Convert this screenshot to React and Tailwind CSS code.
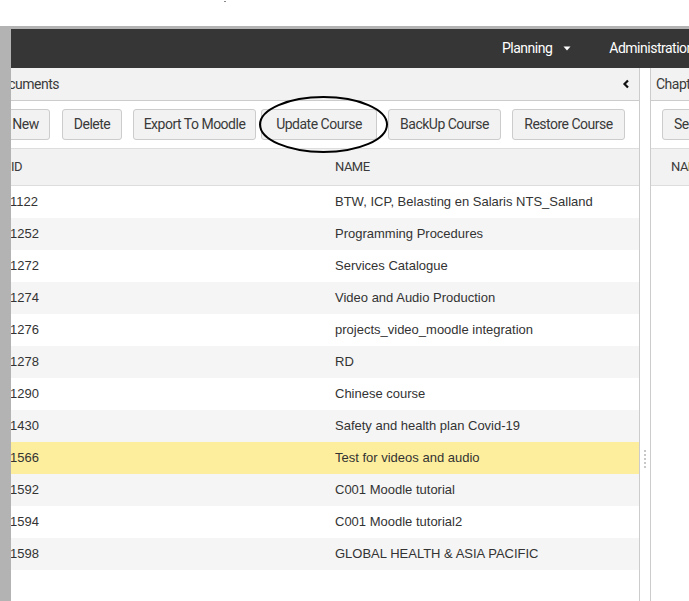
import React from 'react';

const narrow = "font-['Roboto',sans-serif] tracking-[-0.5px]";
const arial = "font-['Liberation_Sans',Arial,sans-serif]";

const rows = [
  { id: '1122', name: 'BTW, ICP, Belasting en Salaris NTS_Salland' },
  { id: '1252', name: 'Programming Procedures' },
  { id: '1272', name: 'Services Catalogue' },
  { id: '1274', name: 'Video and Audio Production' },
  { id: '1276', name: 'projects_video_moodle integration' },
  { id: '1278', name: 'RD' },
  { id: '1290', name: 'Chinese course' },
  { id: '1430', name: 'Safety and health plan Covid-19' },
  { id: '1566', name: 'Test for videos and audio', selected: true },
  { id: '1592', name: 'C001 Moodle tutorial' },
  { id: '1594', name: 'C001 Moodle tutorial2' },
  { id: '1598', name: 'GLOBAL HEALTH & ASIA PACIFIC' },
];

const buttons = [
  { label: 'New', w: 'w-[49px]', ml: 'ml-0' },
  { label: 'Delete', w: 'w-[60px]', ml: 'ml-[12px]' },
  { label: 'Export To Moodle', w: 'w-[123px]', ml: 'ml-[11px]' },
  { label: 'Update Course', w: 'w-[116px]', ml: 'ml-[5px]' },
  { label: 'BackUp Course', w: 'w-[113px]', ml: 'ml-[11px]' },
  { label: 'Restore Course', w: 'w-[113px]', ml: 'ml-[11px]' },
];

const ToolButton = ({ label, w, ml }) => (
  <button
    className={`${ml} ${w} h-[31px] shrink-0 rounded-[3px] border border-[#cccccc] bg-[#f2f2f2] text-[14px] text-[#3a3a3a] whitespace-nowrap ${narrow}`}
  >
    {label}
  </button>
);

const Chevron = () => (
  <svg width="8" height="10" viewBox="0 0 8 10">
    <path d="M6 1.5 L2.5 5 L6 8.5" fill="none" stroke="#111" strokeWidth="2.2" />
  </svg>
);

const Caret = () => (
  <svg width="8" height="5" viewBox="0 0 8 5">
    <path d="M0.5 0.5 L7.5 0.5 L4 4.5 Z" fill="#ffffff" />
  </svg>
);

export default function App() {
  return (
    <div className={`relative w-[689px] h-[601px] bg-white overflow-hidden ${arial}`}>
      <div className="h-[26px] bg-white relative">
        <div className="absolute left-[224px] top-[1px] w-[2px] h-[1px] bg-[#888888]" />
      </div>

      <div className="flex h-[575px] bg-[#b3b3b3] pt-[3px]">
        <div className="w-[11px] shrink-0" />
        <div className="flex-1 flex flex-col bg-white min-w-0">
          {/* Navbar */}
          <div className={`h-[39px] bg-[#363636] flex items-center text-white text-[14px] whitespace-nowrap ${narrow}`}>
            <div className="flex items-center gap-[11px] ml-[491px]">
              <span>Planning</span>
              <Caret />
            </div>
            <span className="ml-[38px]">Administration</span>
          </div>

          <div className="flex flex-1 min-h-0">
            {/* Left panel */}
            <div className="w-[629px] shrink-0 border-r border-[#cccccc] overflow-hidden">
              <div className="ml-[-20px]">
                <div className="h-[33px] bg-[#f2f2f2] border-b border-[#cccccc] flex items-center justify-between pl-[1px] pr-[9px]">
                  <span className={`text-[14px] text-[#3a3a3a] ${narrow}`}>Documents</span>
                  <Chevron />
                </div>
                <div className="h-[48px] border-b border-[#dddddd] flex items-center pl-[10px]">
                  {buttons.map((b) => (
                    <ToolButton key={b.label} {...b} />
                  ))}
                </div>
                <div className={`h-[37px] bg-[#f2f2f2] border-b border-[#dddddd] flex items-center text-[13px] text-[#3a3a3a] ${narrow}`}>
                  <span className="w-[344px] pl-[20px]">ID</span>
                  <span>NAME</span>
                </div>
                {rows.map((r, idx) => (
                  <div
                    key={r.id}
                    className={`h-[32px] flex items-center text-[13px] text-[#333333] ${
                      r.selected ? 'bg-[#fdee9d]' : idx % 2 === 1 ? 'bg-[#f5f5f5]' : 'bg-white'
                    }`}
                  >
                    <span className="w-[344px] pl-[19px]">{r.id}</span>
                    <span className="whitespace-nowrap">{r.name}</span>
                  </div>
                ))}
              </div>
            </div>

            {/* Splitter */}
            <div className="w-[10px] shrink-0 flex flex-col items-center pt-[382px] gap-[2px]">
              {[0, 1, 2, 3, 4].map((i) => (
                <div key={i} className="w-[2px] h-[2px] bg-[#c8c8c8]" />
              ))}
            </div>

            {/* Right panel */}
            <div className="flex-1 border-l border-[#cccccc] overflow-hidden">
              <div className="h-[33px] bg-[#f2f2f2] border-b border-[#cccccc] flex items-center pl-[5px]">
                <span className={`text-[14px] text-[#3a3a3a] whitespace-nowrap ${narrow}`}>Chapters</span>
              </div>
              <div className="h-[48px] border-b border-[#dddddd] flex items-center pl-[11px]">
                <button className={`h-[31px] px-[11px] shrink-0 rounded-[3px] border border-[#cccccc] bg-[#f2f2f2] text-[14px] text-[#3a3a3a] whitespace-nowrap ${narrow}`}>
                  Select
                </button>
              </div>
              <div className={`h-[37px] bg-[#f2f2f2] border-b border-[#dddddd] flex items-center pl-[20px] text-[13px] text-[#3a3a3a] whitespace-nowrap ${narrow}`}>
                NAME
              </div>
            </div>
          </div>
        </div>
      </div>

      {/* annotation ellipse */}
      <svg className="absolute left-[258px] top-[95px]" width="131" height="59" viewBox="0 0 131 59">
        <ellipse cx="65.5" cy="29.5" rx="63.5" ry="27.5" fill="none" stroke="#000" strokeWidth="2" />
      </svg>
    </div>
  );
}
